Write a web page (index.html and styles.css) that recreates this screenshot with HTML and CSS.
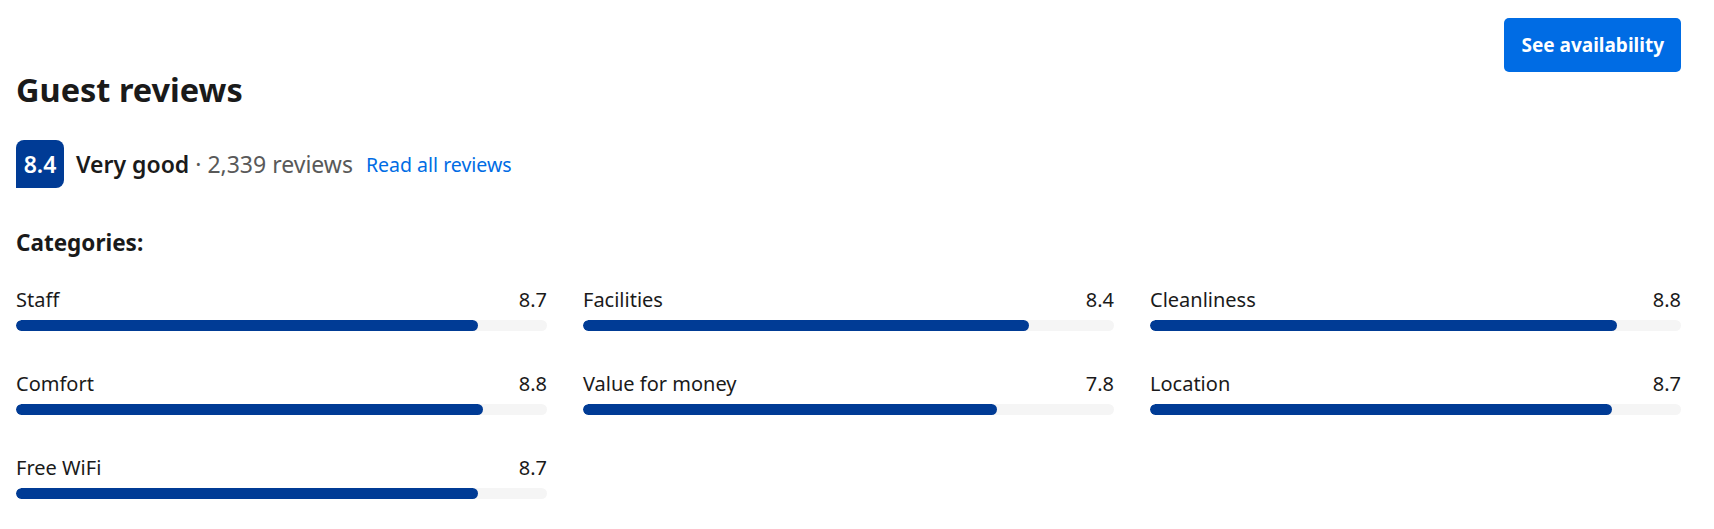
FILE: index.html
```html
<!DOCTYPE html>
<html lang="en">
<head>
<meta charset="utf-8">
<title>Guest reviews</title>
<link rel="stylesheet" href="styles.css">
</head>
<body>
<div class="page">
  <div class="top-row">
    <button class="cta" type="button">See availability</button>
  </div>
  <h2 class="title">Guest reviews</h2>
  <div class="rating-row">
    <div class="badge">8.4</div>
    <div class="rating-text"><span class="rating-word">Very good</span><span class="rating-count"> · 2,339 reviews</span></div>
    <a class="read-all" href="#">Read all reviews</a>
  </div>
  <h3 class="cat-title">Categories:</h3>
  <div class="cats">
    <div class="cat">
      <div class="cat-head"><span>Staff</span><span>8.7</span></div>
      <div class="track"><div class="fill" style="width:87%"></div></div>
    </div>
    <div class="cat">
      <div class="cat-head"><span>Facilities</span><span>8.4</span></div>
      <div class="track"><div class="fill" style="width:84%"></div></div>
    </div>
    <div class="cat">
      <div class="cat-head"><span>Cleanliness</span><span>8.8</span></div>
      <div class="track"><div class="fill" style="width:88%"></div></div>
    </div>
    <div class="cat">
      <div class="cat-head"><span>Comfort</span><span>8.8</span></div>
      <div class="track"><div class="fill" style="width:88%"></div></div>
    </div>
    <div class="cat">
      <div class="cat-head"><span>Value for money</span><span>7.8</span></div>
      <div class="track"><div class="fill" style="width:78%"></div></div>
    </div>
    <div class="cat">
      <div class="cat-head"><span>Location</span><span>8.7</span></div>
      <div class="track"><div class="fill" style="width:87%"></div></div>
    </div>
    <div class="cat">
      <div class="cat-head"><span>Free WiFi</span><span>8.7</span></div>
      <div class="track"><div class="fill" style="width:87%"></div></div>
    </div>
  </div>
</div>
</body>
</html>
```
FILE: styles.css
```css
* { box-sizing: border-box; }
html, body { margin: 0; padding: 0; background: #ffffff; }
body {
  font-family: "Noto Sans", "Open Sans", "Liberation Sans", sans-serif;
  color: #1a1a1a;
}
.page {
  width: 1665px;
  margin-left: 16px;
}
.top-row {
  display: flex;
  justify-content: flex-end;
  padding-top: 18px;
}
.cta {
  height: 54px;
  padding: 0 17px;
  border: none;
  border-radius: 5px;
  background: #006ce4;
  color: #ffffff;
  font-family: inherit;
  font-size: 19px;
  font-weight: 700;
  cursor: pointer;
}
.title {
  margin: 0;
  font-size: 32.5px;
  line-height: 36px;
  font-weight: 700;
  color: #1a1a1a;
}
.rating-row {
  display: flex;
  align-items: center;
  margin-top: 32px;
  height: 48px;
}
.badge {
  width: 48px;
  height: 48px;
  background: #003b95;
  color: #ffffff;
  border-radius: 8px 8px 8px 0;
  display: flex;
  align-items: center;
  justify-content: center;
  font-size: 23px;
  font-weight: 600;
}
.rating-text {
  margin-left: 12px;
  font-size: 23px;
}
.rating-word {
  font-weight: 600;
  color: #1a1a1a;
}
.rating-count {
  color: #595959;
}
.read-all {
  margin-left: 13px;
  font-size: 19.5px;
  color: #006ce4;
  text-decoration: none;
}
.cat-title {
  margin: 39px 0 0 0;
  font-size: 22.5px;
  line-height: 32px;
  font-weight: 700;
}
.cats {
  margin-top: 27px;
  display: grid;
  grid-template-columns: repeat(3, 1fr);
  column-gap: 36px;
  row-gap: 39px;
}
.cat-head {
  display: flex;
  justify-content: space-between;
  font-size: 20px;
  line-height: 28px;
}
.track {
  margin-top: 6px;
  height: 11px;
  border-radius: 6px;
  background: #f5f5f5;
  overflow: hidden;
}
.fill {
  height: 100%;
  border-radius: 6px;
  background: #003b95;
}
```
